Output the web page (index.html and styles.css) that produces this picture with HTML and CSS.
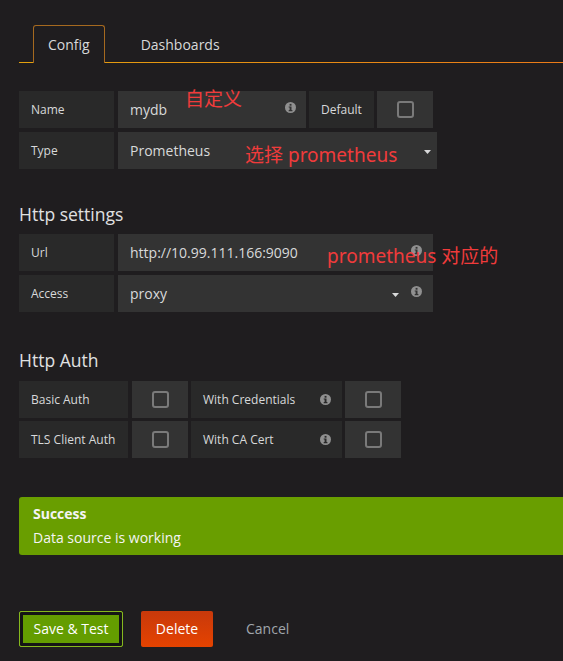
FILE: index.html
```html
<!DOCTYPE html>
<html>
<head>
<meta charset="utf-8">
<link rel="stylesheet" href="styles.css">
</head>
<body>
<div class="page">
  <div class="tabs">
    <div class="tab active">Config</div>
    <div class="tab">Dashboards</div>
  </div>

  <div class="row first">
    <div class="label w95">Name</div>
    <div class="input w188"><span class="val">mydb</span>
      <svg class="info" width="11" height="11" viewBox="0 0 11 11"><circle cx="5.5" cy="5.5" r="5.5" fill="#909090"/><rect x="4.6" y="1.9" width="1.9" height="1.8" fill="#333"/><path d="M3.7 4.5h2.8v3.6h0.9v1.1H3.7V8.1h0.9V5.6h-0.9z" fill="#333"/></svg>
    </div>
    <div class="label w65">Default</div>
    <div class="check"><span class="box"></span></div>
  </div>
  <div class="row">
    <div class="label w95">Type</div>
    <div class="input w319 select"><span class="val">Prometheus</span>
      <svg class="caret" width="7" height="4" viewBox="0 0 7 4"><path d="M0 0h7L3.5 4z" fill="#d8d9da"/></svg>
    </div>
  </div>

  <h3 class="section">Http settings</h3>
  <div class="row">
    <div class="label w95">Url</div>
    <div class="input w315"><span class="val">http://10.99.111.166:9090</span>
      <svg class="info" width="11" height="11" viewBox="0 0 11 11"><circle cx="5.5" cy="5.5" r="5.5" fill="#909090"/><rect x="4.6" y="1.9" width="1.9" height="1.8" fill="#333"/><path d="M3.7 4.5h2.8v3.6h0.9v1.1H3.7V8.1h0.9V5.6h-0.9z" fill="#333"/></svg>
    </div>
  </div>
  <div class="row">
    <div class="label w95">Access</div>
    <div class="input w315"><span class="val">proxy</span>
      <svg class="caret access-caret" width="7" height="4" viewBox="0 0 7 4"><path d="M0 0h7L3.5 4z" fill="#d8d9da"/></svg>
      <svg class="info" width="11" height="11" viewBox="0 0 11 11"><circle cx="5.5" cy="5.5" r="5.5" fill="#909090"/><rect x="4.6" y="1.9" width="1.9" height="1.8" fill="#333"/><path d="M3.7 4.5h2.8v3.6h0.9v1.1H3.7V8.1h0.9V5.6h-0.9z" fill="#333"/></svg>
    </div>
  </div>

  <h3 class="section auth">Http Auth</h3>
  <div class="row tight">
    <div class="label w109">Basic Auth</div>
    <div class="check"><span class="box"></span></div>
    <div class="label w151 lbl-info"><span class="val">With Credentials</span>
      <svg class="info centered" width="11" height="11" viewBox="0 0 11 11"><circle cx="5.5" cy="5.5" r="5.5" fill="#909090"/><rect x="4.6" y="1.9" width="1.9" height="1.8" fill="#292929"/><path d="M3.7 4.5h2.8v3.6h0.9v1.1H3.7V8.1h0.9V5.6h-0.9z" fill="#292929"/></svg>
    </div>
    <div class="check"><span class="box"></span></div>
  </div>
  <div class="row tight">
    <div class="label w109">TLS Client Auth</div>
    <div class="check"><span class="box"></span></div>
    <div class="label w151 lbl-info"><span class="val">With CA Cert</span>
      <svg class="info centered" width="11" height="11" viewBox="0 0 11 11"><circle cx="5.5" cy="5.5" r="5.5" fill="#909090"/><rect x="4.6" y="1.9" width="1.9" height="1.8" fill="#292929"/><path d="M3.7 4.5h2.8v3.6h0.9v1.1H3.7V8.1h0.9V5.6h-0.9z" fill="#292929"/></svg>
    </div>
    <div class="check"><span class="box"></span></div>
  </div>

  <div class="alert">
    <div class="alert-title">Success</div>
    <div class="alert-text">Data source is working</div>
  </div>

  <div class="buttons">
    <button class="btn btn-save">Save &amp; Test</button>
    <button class="btn btn-delete">Delete</button>
    <button class="btn btn-cancel">Cancel</button>
  </div>

  <div class="note note-1">自定义</div>
  <div class="note note-2">选择 prometheus</div>
  <div class="note note-3">prometheus 对应的</div>
</div>
</body>
</html>
```

FILE: styles.css
```css
html, body {
  margin: 0;
  background: #1f1d1f;
  overflow: hidden;
}

.page {
  position: relative;
  padding: 25px 0 40px 19px;
  font-family: "Open Sans", "Liberation Sans", sans-serif;
  color: #d8d9da;
}

.tabs {
  display: flex;
  height: 38px;
  padding-left: 14px;
  background: linear-gradient(to right, #e2a10e, #eb7a18) left bottom / 100% 1px no-repeat;
}

.tab {
  box-sizing: border-box;
  height: 38px;
  padding: 9px 14px 0;
  border: 1px solid transparent;
  border-bottom: 0;
  font-size: 14px;
  line-height: 20px;
  margin-right: 21px;
}

.tab.active {
  border-color: #a5691f;
  background: #1f1d1f;
  border-radius: 3px 3px 0 0;
}

.row {
  display: flex;
  gap: 3px;
  height: 37px;
  margin-bottom: 4px;
}

.row.first {
  margin-top: 28px;
}

.row.tight {
  margin-bottom: 3px;
}

.row > :first-child {
  margin-right: 1px;
}

.label, .input, .check {
  box-sizing: border-box;
  height: 37px;
  display: flex;
  align-items: center;
}

.label {
  background: #292929;
  padding: 0 12px;
  font-size: 12px;
}

.input {
  background: #333333;
  padding: 0 10px 0 12px;
  font-size: 14px;
}

.input.select {
  padding-right: 6px;
}

.val {
  flex: 1;
  white-space: nowrap;
}

.w95 { width: 95px; }
.w65 { width: 65px; }
.w109 { width: 109px; }
.w151 { width: 151px; padding-right: 11px; }
.w188 { width: 188px; }
.w315 { width: 315px; padding-right: 11px; }
.w319 { width: 319px; }

.info {
  flex: none;
  margin-bottom: 5px;
}

.info.centered {
  margin-bottom: 0;
}

.caret {
  flex: none;
  margin-top: 3px;
}

.access-caret {
  margin-right: 12px;
  margin-top: 2px;
}

.check {
  width: 56px;
  background: #333333;
  justify-content: center;
}

.box {
  box-sizing: border-box;
  width: 17px;
  height: 17px;
  border: 2px solid #7a7a7a;
  border-radius: 3px;
}

.section {
  margin: 33px 0 8px;
  font-size: 17.5px;
  font-weight: 400;
  line-height: 24px;
  color: #e0e1e2;
}

.section.auth {
  margin: 36px 0 9px;
}

.alert {
  margin-top: 39px;
  background: #699e00;
  border-radius: 3px 0 0 3px;
  padding: 6px 14px;
  color: #f4f4f4;
  font-size: 14px;
}

.alert-title {
  font-weight: 700;
  line-height: 22px;
  margin-bottom: 2px;
}

.alert-text {
  line-height: 22px;
}

.buttons {
  display: flex;
  align-items: center;
  margin-top: 56px;
}

.btn {
  box-sizing: border-box;
  height: 36px;
  padding: 0 15px;
  border: 0;
  border-radius: 2px;
  font-family: "Open Sans", "Liberation Sans", sans-serif;
  font-size: 14px;
  line-height: 20px;
  color: #ffffff;
  background: none;
}

.btn-save {
  width: 104px;
  padding: 0;
  border: 1px solid #86b81e;
  box-shadow: inset 0 0 0 3px #151515;
  background: #649d00;
}

.btn-delete {
  width: 72px;
  padding: 0;
  margin-left: 18px;
  background: linear-gradient(to bottom, #c8390b, #e54300);
}

.btn-cancel {
  margin-left: 18px;
  color: #a0a6ac;
}

.note {
  position: absolute;
  color: #f03b3b;
  font-family: "Noto Sans", "Noto Sans CJK SC", sans-serif;
  font-size: 19px;
  line-height: 19px;
  white-space: nowrap;
}

.note-1 { left: 185px; top: 90px; }
.note-2 { left: 245px; top: 146px; }
.note-3 { left: 327px; top: 247px; }
```
